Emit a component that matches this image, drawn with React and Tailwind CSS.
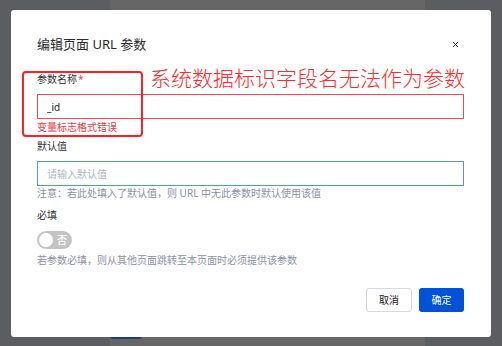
import React from 'react'
import { X } from 'lucide-react'

function App() {
    const [name, setName] = React.useState('_id')
    const [defVal, setDefVal] = React.useState('')
    const [required, setRequired] = React.useState(false)

    return (
        <div className="relative w-[502px] h-[346px] overflow-hidden flex font-['Noto_Sans','Noto_Sans_CJK_SC',sans-serif]">

            {/* Page behind the overlay */}
            <div className="w-[110px] h-full bg-[#5c5d60]" />
            <div className="w-[315px] h-full bg-[#666666] flex flex-col justify-end">
                <div className="w-[32px] h-[9px] mb-[7px] rounded-[3px] bg-[#1d3e86]" />
            </div>
            <div className="flex-1 h-full bg-[#5c5d60]" />

            {/* Dialog */}
            <div className="absolute left-[11px] top-[10px] w-[480px] h-[327px] bg-white rounded-[3px] pl-[26px] pr-[27px] pt-[25px] flex flex-col">
                <div className="flex items-center justify-between h-[18px]">
                    <h2 className="text-[13px] leading-[18px] text-[#2b2b2b]">编辑页面 URL 参数</h2>
                    <X size={9} strokeWidth={2.5} className="text-[#333] mr-[4px]" />
                </div>

                <label className="mt-[19px] text-[10px] leading-[14px] text-[#333]">
                    参数名称<span className="text-[#e5484d] ml-[1px]">*</span>
                </label>
                <input
                    className="mt-[8px] h-[25px] border border-[#f3484f] px-[9px] text-[10px] text-[#222] outline-none"
                    value={name}
                    onChange={(e) => setName(e.target.value)}
                />
                <p className="mt-[1px] text-[10px] leading-[14px] text-[#ee3b3b]">变量标志格式错误</p>

                <label className="mt-[5px] text-[10px] leading-[14px] text-[#333]">默认值</label>
                <input
                    className="mt-[8px] h-[25px] border border-[#5794e0] px-[9px] text-[10px] text-[#222] outline-none placeholder:text-[#b0b6c2]"
                    placeholder="请输入默认值"
                    value={defVal}
                    onChange={(e) => setDefVal(e.target.value)}
                />
                <p className="text-[10px] leading-[14px] text-[#8a93a5]">注意：若此处填入了默认值，则 URL 中无此参数时默认使用该值</p>

                <label className="mt-[8px] text-[10px] leading-[14px] text-[#333]">必填</label>
                <button
                    type="button"
                    onClick={() => setRequired(!required)}
                    className="mt-[9px] w-[35px] h-[18px] rounded-full bg-[#c4c4c4] flex items-center pl-[2px] pr-[5px] justify-between"
                >
                    <span className="w-[14px] h-[14px] rounded-full bg-white" />
                    <span className="text-[10px] leading-none text-white font-medium">否</span>
                </button>
                <p className="mt-[4px] text-[10px] leading-[14px] text-[#8a93a5]">若参数必填，则从其他页面跳转至本页面时必须提供该参数</p>

                <div className="mt-[21px] flex justify-end gap-[7px]">
                    <button className="w-[46px] h-[24px] border border-[#d6d9e0] rounded-[3px] bg-white text-[10px] text-[#222]">取消</button>
                    <button className="w-[45px] h-[24px] rounded-[3px] bg-[#0052d9] text-[10px] text-white">确定</button>
                </div>
            </div>

            {/* Annotation */}
            <div className="absolute left-[22px] top-[71px] w-[121px] h-[66px] border-[2.5px] border-[#ff2020] rounded-[4px]" />
            <p className="absolute left-[150px] top-[64px] text-[21px] leading-[26px] font-light text-[#ff2a2a] font-['Noto_Sans_CJK_SC',sans-serif]">系统数据标识字段名无法作为参数</p>
        </div>
    )
}

export default App
